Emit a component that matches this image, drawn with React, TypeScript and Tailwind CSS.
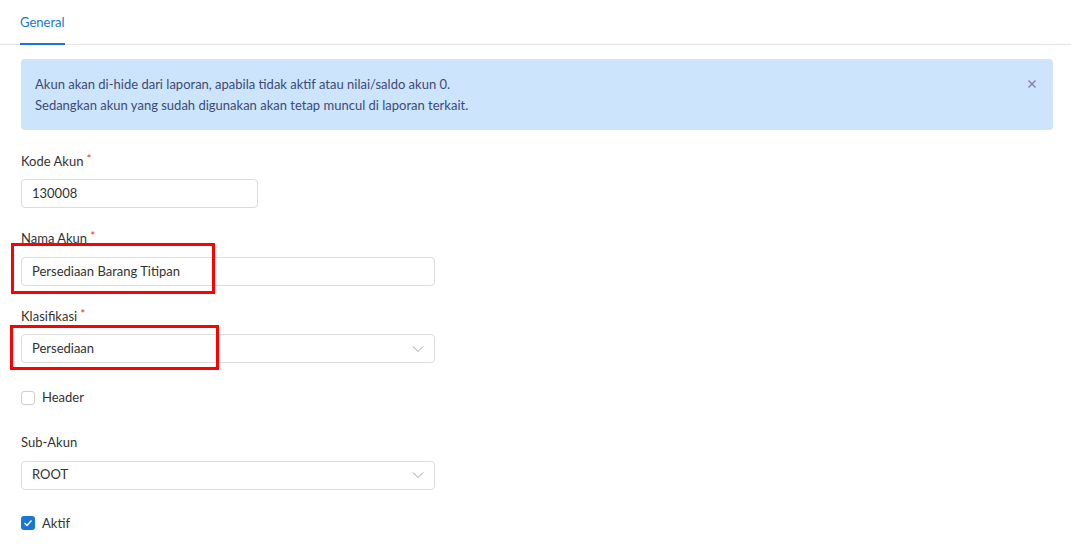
import * as React from "react";

const Label = ({ text, required }: { text: string; required?: boolean }) => (
  <div className="text-[13px] leading-[18px] text-[#333]">
    {text}
    {required && <span className="ml-[3px] align-top text-[12px] leading-[14px] text-[#e53935]">*</span>}
  </div>
);

const Chevron = () => (
  <svg width="12" height="8" viewBox="0 0 12 8" className="text-[#a89aa6]">
    <path d="M1 1.5l5 5 5-5" fill="none" stroke="currentColor" strokeWidth="1" />
  </svg>
);

const Field = ({
  value,
  wide,
  select,
}: {
  value: string;
  wide?: boolean;
  select?: boolean;
}) => (
  <div
    className={`flex h-[29px] items-center justify-between rounded-[4px] border border-[#dcdcdc] bg-white pl-[10px] pr-[10px] text-[13px] text-[#333] ${
      wide ? "w-[414px]" : "w-[237px]"
    }`}
  >
    <span>{value}</span>
    {select && <Chevron />}
  </div>
);

const Highlight = ({ className }: { className: string }) => (
  <div className={`pointer-events-none absolute border-[3px] border-[#ff0000] ${className}`} />
);

export default function App() {
  return (
    <div
      className="h-[560px] w-[1071px] overflow-hidden bg-white"
      style={{ fontFamily: "Lato, 'Open Sans', sans-serif" }}
    >
      <div className="border-b border-[#e2e2e2] pl-[20px]">
        <div className="relative inline-block h-[44px] pt-[13px] text-[13px] text-[#1976d2]">
          General
          <div className="absolute bottom-[-1px] left-0 right-0 h-[2px] bg-[#1976d2]" />
        </div>
      </div>

      <div className="pl-[21px] pr-[18px] pt-[14px]">
        <div className="flex h-[71px] items-start justify-between rounded-[4px] bg-[#cce5fc] pl-[14px] pr-[16px] pt-[15px] text-[13px] leading-[21px] text-[#3c4a78]">
          <div>
            <div>Akun akan di-hide dari laporan, apabila tidak aktif atau nilai/saldo akun 0.</div>
            <div>Sedangkan akun yang sudah digunakan akan tetap muncul di laporan terkait.</div>
          </div>
          <span className="mt-[5px] text-[#8a7aa6]">
            <svg width="10" height="10" viewBox="0 0 10 10">
              <path d="M1.5 1.5l7 7M8.5 1.5l-7 7" stroke="currentColor" strokeWidth="1.4" />
            </svg>
          </span>
        </div>

        <div className="relative flex flex-col">
          <div className="mt-[22px]">
            <Label text="Kode Akun" required />
            <div className="mt-[9px]">
              <Field value="130008" />
            </div>
          </div>

          <div className="mt-[21px]">
            <Label text="Nama Akun" required />
            <div className="mt-[10px]">
              <Field value="Persediaan Barang Titipan" wide />
            </div>
          </div>

          <div className="mt-[21px]">
            <Label text="Klasifikasi" required />
            <div className="mt-[9px]">
              <Field value="Persediaan" wide select />
            </div>
          </div>

          <label className="mt-[25px] flex items-center gap-[7px] text-[13px] text-[#333]">
            <span className="h-[14px] w-[14px] rounded-[3px] border border-[#cfcfcf] bg-white" />
            Header
          </label>

          <div className="mt-[25px]">
            <Label text="Sub-Akun" />
            <div className="mt-[10px]">
              <Field value="ROOT" wide select />
            </div>
          </div>

          <label className="mt-[24px] flex items-center gap-[7px] text-[13px] text-[#333]">
            <span className="flex h-[14px] w-[14px] items-center justify-center rounded-[3px] bg-[#1976d2]">
              <svg width="10" height="8" viewBox="0 0 10 8">
                <path d="M1.5 4l2.5 2.5 4.5-5" fill="none" stroke="white" strokeWidth="1.4" />
              </svg>
            </span>
            Aktif
          </label>

          <Highlight className="left-[-10px] top-[113px] h-[51px] w-[204px]" />
          <Highlight className="left-[-11px] top-[195px] h-[45px] w-[209px]" />
        </div>
      </div>
    </div>
  );
}
